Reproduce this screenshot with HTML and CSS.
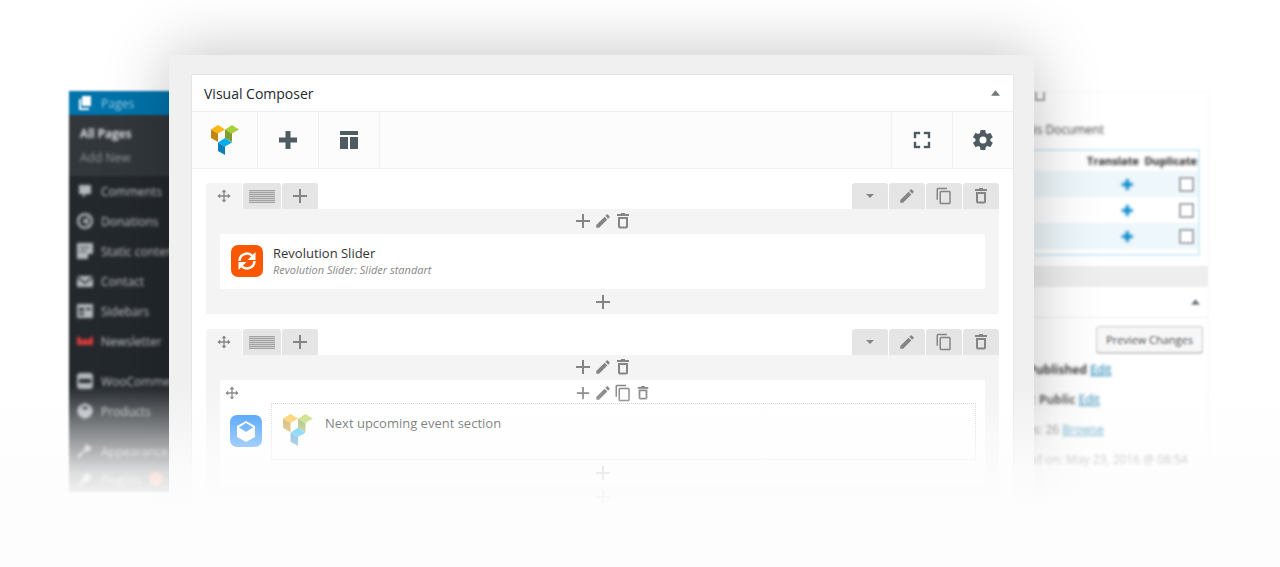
FILE: index.html
```html
<!DOCTYPE html>
<html lang="en">
<head>
  <meta charset="UTF-8">
  <title>Visual Composer</title>
  <link rel="stylesheet" href="styles.css">
</head>
<body>

<svg class="sprite" aria-hidden="true">
  <symbol id="i-plus" viewBox="0 0 16 16"><path d="M7 1h2v6h6v2H9v6H7V9H1V7h6z"/></symbol>
  <symbol id="i-pencil" viewBox="0 0 24 24"><path d="M3 17.2V21h3.8L17.8 9.9l-3.700-3.700zM20.700 7c.4-.4.4-1 0-1.400l-2.300-2.300c-.4-.4-1-.4-1.400 0l-1.900 1.800 3.800 3.800z"/></symbol>
  <symbol id="i-copy" viewBox="0 0 24 24"><path d="M16 1H4a2 2 0 0 0-2 2v14h2V3h12zm3 4H8a2 2 0 0 0-2 2v14a2 2 0 0 0 2 2h11a2 2 0 0 0 2-2V7a2 2 0 0 0-2-2zm0 16H8V7h11z"/></symbol>
  <symbol id="i-trash" viewBox="0 0 16 16"><path d="M3 4h10v9.500a2 2 0 0 1-2 2H5a2 2 0 0 1-2-2zm2 2v7.500h6V6zM6 0h4v1h4v2H2V1h4z"/></symbol>
  <symbol id="i-move" viewBox="0 0 16 16"><path d="M8 0.500l2.800 3.200H8.800v3.500h3.500V5.200L15.500 8l-3.200 2.800V8.800H8.800v3.500h2L8 15.500l-2.800-3.200h2V8.800H3.700v2L.5 8l3.200-2.800v2h3.500V3.700h-2z"/></symbol>
  <symbol id="i-logo" viewBox="0 0 28 30">
    <path fill="#ffb716" d="M0 4.500 7 0l7 4.500-7 4z"/><path fill="#c18713" d="M0 4.500l7 4V17l-7-4z"/>
    <path fill="#acd03a" d="M14 4.500 21 0l7 4.500-7 4z"/><path fill="#7f9e2c" d="M14 4.500l7 4V17l-7-4z"/>
    <path fill="#00aef0" d="M7 17.500l7-4.500 7 4.500-7 4z"/><path fill="#0d7fb9" d="M7 17.500l7 4V30l-7-4z"/>
  </symbol>
</svg>

<div class="stage">

  <nav class="sidebar">
    <a class="menu-item current" href="#"><svg viewBox="0 0 16 16"><path d="M5 1h9v10H5zM2 4h2v9h8v2H2z"/></svg>Pages</a>
    <div class="submenu">
      <a class="active" href="#">All Pages</a>
      <a href="#">Add New</a>
    </div>
    <a class="menu-item" href="#"><svg viewBox="0 0 16 16"><path d="M2 2h12v9H9l-3 4v-4H2z"/></svg>Comments</a>
    <a class="menu-item" href="#"><svg viewBox="0 0 16 16"><path d="M8 0a8 8 0 1 0 0 16A8 8 0 0 0 8 0zm0 2.500A5.500 5.500 0 1 1 8 13.500 5.500 5.500 0 0 1 8 2.500zM11 4L5 8l6 4z"/></svg>Donations</a>
    <a class="menu-item" href="#"><svg viewBox="0 0 16 16"><path d="M0 0h16v11h-5v5H0zM3 4v1h9V4zm0 4v1h6V8z"/></svg>Static content</a>
    <a class="menu-item" href="#"><svg viewBox="0 0 16 16"><path d="M0 3h16L8 9zM0 5l8 6 8-6v9H0z"/></svg>Contact</a>
    <a class="menu-item" href="#"><svg viewBox="0 0 16 16"><path d="M0 1h16v14H0zM2 5v3h5V5zm7 0v2h5V5zM2 10v2h5v-2z"/></svg>Sidebars</a>
    <a class="menu-item" href="#"><svg class="red" viewBox="0 0 16 16"><path d="M0 4h3l2 4 3-3 3 3 2-4h3v8H0z"/></svg>Newsletter</a>
    <a class="menu-item group" href="#"><svg viewBox="0 0 16 16"><path d="M2 0h12l2 2v12l-2 2H2l-2-2V2zM2 6v4h12V6z"/></svg>WooCommerce</a>
    <a class="menu-item" href="#"><svg viewBox="0 0 16 16"><path d="M8 0l6 3 2 5-2 5-6 3-6-3-2-5 2-5zM4 5l4 2 4-2-4-2z"/></svg>Products</a>
    <a class="menu-item group" href="#"><svg viewBox="0 0 16 16"><path d="M9 1l6 4-4 4-3-1-6 7-2-2 7-6z"/></svg>Appearance</a>
    <a class="menu-item last" href="#"><svg viewBox="0 0 16 16"><path d="M10 1l5 5-4 5-4 1-5 3-1-1 4-5 1-4z"/></svg>Plugins <span class="count"></span></a>
  </nav>

  <main class="composer">
    <section class="panel">
      <header class="panel-head">
        <h1>Visual Composer</h1>
        <button class="toggle" aria-label="Toggle panel"><svg viewBox="0 0 10 6"><path d="M5 0l5 6H0z"/></svg></button>
      </header>

      <div class="toolbar">
        <button class="logo" aria-label="Visual Composer"><svg><use href="#i-logo"/></svg></button>
        <button aria-label="Add element"><svg viewBox="0 0 18 18"><path d="M6.500 0h5v6.500H18v5h-6.500V18h-5v-6.500H0v-5h6.500z"/></svg></button>
        <button aria-label="Templates"><svg viewBox="0 0 18 18"><path d="M0 0h18v4H0zM0 6h8v12H0zM10 6h8v12h-8z"/></svg></button>
        <span class="spacer"></span>
        <button aria-label="Fullscreen"><svg viewBox="0 0 18 18"><path d="M1 1h6v2H3v4H1zM11 1h6v6h-2V3h-4zM1 11h2v4h4v2H1zM15 11h2v6h-6v-2h4z" stroke="currentColor" stroke-width=".4"/></svg></button>
        <button class="gear" aria-label="Settings"><svg viewBox="2 2 20 20"><path d="M19.400 13a7.500 7.500 0 0 0 0-2l2.100-1.600c.2-.2.3-.5.1-.7l-2-3.400c-.1-.2-.4-.3-.6-.2l-2.500 1a7 7 0 0 0-1.700-1l-.4-2.600c0-.3-.2-.5-.5-.5h-4c-.2 0-.4.2-.5.500L9 5.100a7 7 0 0 0-1.700 1l-2.500-1c-.2-.1-.5 0-.6.2l-2 3.400c-.1.2-.1.5.1.700L4.500 11a7.500 7.500 0 0 0 0 2l-2.200 1.600c-.2.2-.2.5-.1.700l2 3.400c.1.2.4.3.6.2l2.500-1a7 7 0 0 0 1.700 1l.4 2.600c.1.300.3.500.5.500h4c.3 0 .5-.2.5-.5l.4-2.600a7 7 0 0 0 1.700-1l2.500 1c.2.1.5 0 .6-.2l2-3.400c.1-.2.1-.5-.1-.7zM12 15.500a3.500 3.500 0 1 1 0-7 3.500 3.500 0 0 1 0 7z"/></svg></button>
      </div>

      <div class="rows">
        <div class="row">
          <div class="tabs">
            <button class="move" aria-label="Move row"><svg><use href="#i-move"/></svg></button>
            <button class="lines" aria-label="Row layout"><span></span></button>
            <button aria-label="Add column"><svg><use href="#i-plus"/></svg></button>
            <span class="spacer"></span>
            <button class="caret" aria-label="Collapse row"><svg viewBox="0 0 8 4"><path d="M0 0h8L4 4z"/></svg></button>
            <button class="big" aria-label="Edit row"><svg><use href="#i-pencil"/></svg></button>
            <button class="big" aria-label="Clone row"><svg><use href="#i-copy"/></svg></button>
            <button aria-label="Delete row"><svg><use href="#i-trash"/></svg></button>
          </div>
          <div class="column">
            <div class="controls top">
              <button aria-label="Add"><svg><use href="#i-plus"/></svg></button>
              <button class="big" aria-label="Edit"><svg><use href="#i-pencil"/></svg></button>
              <button aria-label="Delete"><svg><use href="#i-trash"/></svg></button>
            </div>
            <div class="element">
              <svg class="badge" viewBox="0 0 32 32"><rect width="32" height="32" rx="7" fill="#f95700"/><path fill="none" stroke="#fff" stroke-width="2.500" d="M8.500 16a7.500 7.500 0 0 1 13-5M23.500 16a7.500 7.500 0 0 1-13 5"/><path fill="#fff" d="M24.500 7v8h-8zM7.500 25v-8h8z"/></svg>
              <div>
                <h2>Revolution Slider</h2>
                <p>Revolution Slider: Slider standart</p>
              </div>
            </div>
            <div class="controls">
              <button aria-label="Append"><svg><use href="#i-plus"/></svg></button>
            </div>
          </div>
        </div>

        <div class="row">
          <div class="tabs">
            <button class="move" aria-label="Move row"><svg><use href="#i-move"/></svg></button>
            <button class="lines" aria-label="Row layout"><span></span></button>
            <button aria-label="Add column"><svg><use href="#i-plus"/></svg></button>
            <span class="spacer"></span>
            <button class="caret" aria-label="Expand row"><svg viewBox="0 0 8 4"><path d="M0 0h8L4 4z"/></svg></button>
            <button class="big" aria-label="Edit row"><svg><use href="#i-pencil"/></svg></button>
            <button class="big" aria-label="Clone row"><svg><use href="#i-copy"/></svg></button>
            <button aria-label="Delete row"><svg><use href="#i-trash"/></svg></button>
          </div>
          <div class="column">
            <div class="controls top">
              <button aria-label="Add"><svg><use href="#i-plus"/></svg></button>
              <button class="big" aria-label="Edit"><svg><use href="#i-pencil"/></svg></button>
              <button aria-label="Delete"><svg><use href="#i-trash"/></svg></button>
            </div>
            <div class="container">
              <div class="container-head">
                <button class="move" aria-label="Move section"><svg><use href="#i-move"/></svg></button>
                <div class="controls">
                  <button class="small" aria-label="Add"><svg><use href="#i-plus"/></svg></button>
                  <button class="big" aria-label="Edit"><svg><use href="#i-pencil"/></svg></button>
                  <button class="big" aria-label="Clone"><svg><use href="#i-copy"/></svg></button>
                  <button class="small" aria-label="Delete"><svg><use href="#i-trash"/></svg></button>
                </div>
              </div>
              <div class="container-body">
                <svg class="badge" viewBox="0 0 32 32"><rect width="32" height="32" rx="7" fill="#1a87fb"/><path fill="#fff" d="M16 6l9 5v11l-9 5-9-5V11z"/><path fill="#1a87fb" d="M16 8l7 4.500-7 4.500-7-4.500z"/></svg>
                <div class="slot">
                  <svg class="mark" viewBox="0 0 28 30"><use href="#i-logo"/></svg>
                  <h2>Next upcoming event section</h2>
                </div>
              </div>
              <div class="controls">
                <button aria-label="Append"><svg><use href="#i-plus"/></svg></button>
              </div>
            </div>
            <div class="controls top">
              <button aria-label="Append"><svg><use href="#i-plus"/></svg></button>
            </div>
          </div>
        </div>
      </div>
    </section>
  </main>

  <aside class="settings">
    <div class="language">
      <input type="checkbox" class="first" aria-label="Language option">
      <p>of this Document</p>
      <table>
        <tr><th></th><th>Translate</th><th>Duplicate</th></tr>
        <tr><td></td><td><a href="#" aria-label="Translate">✚</a></td><td><input type="checkbox" aria-label="Duplicate"></td></tr>
        <tr><td></td><td><a href="#" aria-label="Translate">✚</a></td><td><input type="checkbox" aria-label="Duplicate"></td></tr>
        <tr><td></td><td><a href="#" aria-label="Translate">✚</a></td><td><input type="checkbox" aria-label="Duplicate"></td></tr>
      </table>
    </div>
    <div class="publish">
      <div class="publish-head"><svg viewBox="0 0 10 6"><path d="M5 0l5 6H0z"/></svg></div>
      <button class="preview">Preview Changes</button>
      <p>Status: <b>Published</b> <a href="#">Edit</a></p>
      <p>Visibility: <b>Public</b> <a href="#">Edit</a></p>
      <p>Revisions: 26 <a href="#">Browse</a></p>
      <p>Published on: May 23, 2016 @ 08:54</p>
    </div>
  </aside>

  <div class="fade"></div>
</div>

</body>
</html>
```
FILE: styles.css
```css
* {
  box-sizing: border-box;
}

body {
  margin: 0;
  background: #fff;
  font-family: "Open Sans", sans-serif;
  font-size: 12px;
  color: #444;
}

h1, h2, p {
  margin: 0;
}

button {
  display: flex;
  align-items: center;
  justify-content: center;
  padding: 0;
  border: none;
  background: none;
  font-family: inherit;
  color: inherit;
  cursor: pointer;
}

svg {
  display: block;
  flex-shrink: 0;
  fill: currentColor;
}

.sprite {
  display: none;
}

.spacer {
  flex: 1;
}

.stage {
  position: relative;
  display: grid;
  grid-template-columns: 100px minmax(0, 1fr) 175px;
  align-items: start;
  height: 100vh;
  padding: 0 71px 0 69px;
  overflow: hidden;
}

/* blurred admin menu */
.sidebar {
  margin: 91px -60px 0 0;
  background: #23282d;
  filter: blur(1px);
}

/* text and icons get a second pass so they are softer than the panel edges */
.sidebar > .menu-item:not(.current),
.submenu a,
.language p,
.language th,
.language td a,
.publish p {
  filter: blur(1px);
}

.menu-item {
  display: flex;
  align-items: center;
  gap: 8px;
  height: 30px;
  padding-left: 8px;
  color: #c6c9cc;
  text-decoration: none;
  white-space: nowrap;
}

.menu-item svg {
  width: 16px;
  height: 16px;
  color: #b4b9be;
}

.menu-item svg.red {
  color: #d43b3b;
}

.menu-item.current {
  height: 24px;
  background: #0073aa;
  color: #8cc4e0;
}

.menu-item.current svg {
  color: #fff;
}

.menu-item.group {
  margin-top: 10px;
}

.menu-item.last {
  height: 26px;
}

.submenu {
  padding: 7px 0 6px 11px;
  background: #32373c;
}

.submenu a {
  display: block;
  line-height: 24px;
  color: #92979b;
  text-decoration: none;
}

.submenu a.active {
  color: #fff;
  font-weight: 600;
}

.count {
  width: 14px;
  height: 14px;
  border-radius: 50%;
  background: #f2632a;
}

/* composer window */
.composer {
  position: relative;
  z-index: 1;
  margin-top: 55px;
  padding: 19px 20px 60px 22px;
  background: #f0f0f0;
  box-shadow: 0 0 60px rgba(0, 0, 0, 0.25);
}

.panel {
  border: 1px solid #e5e5e5;
  background: #fff;
}

.panel-head {
  display: flex;
  align-items: center;
  justify-content: space-between;
  height: 37px;
  padding: 0 13px 0 12px;
  border-bottom: 1px solid #eee;
}

.panel-head h1 {
  font-size: 14px;
  font-weight: 500;
  color: #23282d;
}

.toggle svg {
  width: 9px;
  height: 6px;
  color: #72777c;
}

.toolbar {
  display: flex;
  height: 57px;
  border-bottom: 1px solid #f2f2f2;
  background: #fcfcfc;
  color: #4f5b62;
}

.toolbar button {
  width: 61px;
  border-right: 1px solid #f2f2f2;
}

.toolbar .logo {
  width: 66px;
}

.toolbar .spacer {
  border-right: 1px solid #f2f2f2;
}

.toolbar .gear {
  width: 60px;
  border-right: none;
}

.toolbar svg {
  width: 18px;
  height: 18px;
}

.toolbar .logo svg {
  width: 28px;
  height: 30px;
}

.toolbar .gear svg {
  width: 20px;
  height: 20px;
}

.rows {
  display: flex;
  flex-direction: column;
  gap: 15px;
  padding: 14px;
  color: #858585;
}

.tabs {
  display: flex;
  gap: 1px;
}

.tabs button {
  width: 36px;
  height: 26px;
  border-radius: 3px 3px 0 0;
  background: #e5e5e5;
}

.tabs .move {
  background: #f4f4f4;
}

.tabs .lines {
  width: 38px;
}

.lines span {
  width: 26px;
  height: 13px;
  background: repeating-linear-gradient(#a3a3a3 0 1px, #cfcfcf 1px 2px);
}

.tabs svg {
  width: 16px;
  height: 16px;
}

.tabs .move svg,
.container-head .move svg {
  width: 14px;
  height: 14px;
}

.tabs .big svg,
.controls .big svg {
  width: 18px;
  height: 18px;
}

.tabs .caret svg {
  width: 8px;
  height: 4px;
}

.column {
  padding: 0 14px;
  background: #f4f4f4;
}

.controls {
  display: flex;
  align-items: center;
  justify-content: center;
  gap: 4px;
  height: 25px;
}

.controls.top {
  padding-bottom: 2px;
}

.controls button {
  width: 16px;
}

.controls svg {
  width: 16px;
  height: 16px;
}

.controls .small svg {
  width: 14px;
  height: 14px;
}

.element {
  display: flex;
  align-items: center;
  gap: 10px;
  min-height: 55px;
  padding: 0 11px 2px;
  border-radius: 2px;
  background: #fff;
}

.badge {
  width: 32px;
  height: 32px;
}

h2 {
  font-size: 13px;
  font-weight: 500;
  line-height: 18px;
  color: #333;
}

.element p {
  font-size: 11px;
  font-style: italic;
  line-height: 16px;
  color: #888;
}

.container {
  background: #fff;
}

/* side columns differ so the icons line up with the row controls above */
.container-head {
  display: grid;
  grid-template-columns: 24px 1fr 4px;
  height: 23px;
}

.container-body {
  display: flex;
  gap: 9px;
  padding: 0 9px 0 10px;
}

.container-body .badge {
  margin-top: 12px;
}

.slot {
  display: flex;
  flex: 1;
  gap: 12px;
  height: 57px;
  padding: 10px 11px;
  border: 1px dotted #ccc;
}

.mark {
  width: 30px;
  height: 32px;
  opacity: 0.8;
}

/* blurred settings column */
.settings {
  margin: 91px 0 0 -48px;
  border: 1px solid #f7f7f7;
  background: #fff;
  filter: blur(1px);
}

.language {
  height: 174px;
  padding-right: 8px;
}

.language p {
  margin: 20px 96px 10px 0;
  line-height: 18px;
  text-align: right;
}

input[type="checkbox"] {
  display: block;
  appearance: none;
  width: 15px;
  height: 15px;
  margin: 0 4px 0 auto;
  border: 2px solid #a4a9ae;
  background: #fff;
}

.language .first {
  width: 10px;
  height: 9px;
  margin: 0 0 0 48px;
  border-top: none;
}

.language table {
  width: 100%;
  padding-bottom: 5px;
  border: 2px solid #d5edf8;
  border-spacing: 0;
}

.language th {
  width: 58px;
  height: 20px;
  padding: 0 1px 0 0;
  line-height: 18px;
  font-size: 11px;
  text-align: right;
  color: #222;
}

.language th:first-child {
  width: auto;
}

.language td {
  height: 26px;
  padding: 0;
  text-align: right;
}

.language tr:nth-child(even) {
  background: #eef7fb;
}

.language td a {
  display: block;
  margin-right: 6px;
  font-size: 15px;
  line-height: 18px;
  color: #0085c8;
  text-decoration: none;
}

.publish {
  border-top: 21px solid #eee;
}

.publish-head {
  display: flex;
  align-items: center;
  justify-content: flex-end;
  height: 31px;
  padding-right: 8px;
  border-bottom: 1px solid #eee;
  color: #72777c;
}

.publish-head svg {
  width: 9px;
  height: 6px;
}

.preview {
  height: 27px;
  margin: 8px 5px 2px auto;
  padding: 0 9px;
  border: 1px solid #ccc;
  border-radius: 3px;
  background: #f7f7f7;
  box-shadow: 0 1px 0 #ccc;
  font-size: 11px;
  color: #555;
}

.publish p {
  line-height: 30px;
  white-space: nowrap;
}

.publish a {
  color: #0073aa;
}

.fade {
  position: absolute;
  z-index: 2;
  right: 0;
  bottom: 0;
  left: 0;
  height: 182px;
  background: linear-gradient(rgba(253, 253, 253, 0), rgba(253, 253, 253, 0.45) 25%, rgba(253, 253, 253, 0.85) 48%, #fdfdfd 67%);
  pointer-events: none;
}
```
